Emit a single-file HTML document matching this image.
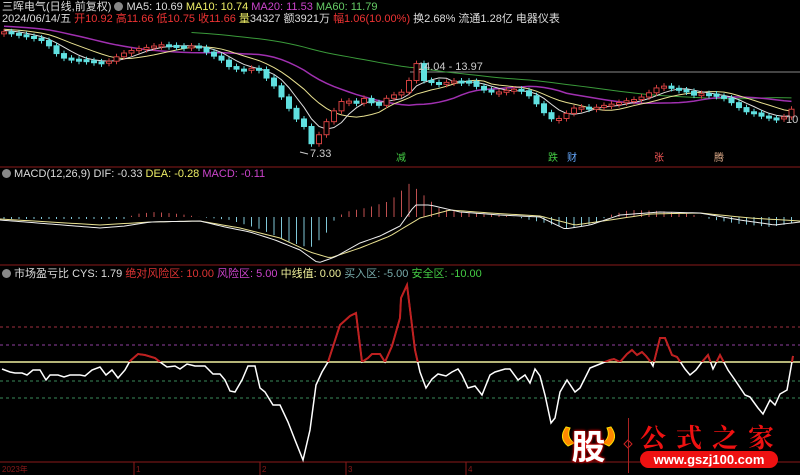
<!DOCTYPE html>
<html><head><meta charset="utf-8"><style>
html,body{margin:0;padding:0;background:#000;width:800px;height:475px;overflow:hidden;font-family:"Liberation Sans","Noto Sans CJK SC",sans-serif}
.t{position:absolute;font-size:11px;white-space:nowrap;line-height:12px}
</style></head><body>
<svg id="s" width="800" height="475" style="position:absolute;left:0;top:0">
<line x1="0" y1="167" x2="800" y2="167" stroke="#8a1a1a"/>
<line x1="0" y1="265" x2="800" y2="265" stroke="#8a1a1a"/>
<line x1="0" y1="462" x2="800" y2="462" stroke="#8a1a1a"/>
<line x1="410" y1="72" x2="800" y2="72" stroke="#888"/>
<line x1="0" y1="327" x2="800" y2="327" stroke="#a03040" stroke-dasharray="3,3"/>
<line x1="0" y1="345" x2="800" y2="345" stroke="#9040a0" stroke-dasharray="3,3"/>
<line x1="0" y1="381" x2="800" y2="381" stroke="#3a8a5a" stroke-dasharray="3,3"/>
<line x1="0" y1="398" x2="800" y2="398" stroke="#3a8a5a" stroke-dasharray="3,3"/>
<line x1="0" y1="362" x2="800" y2="362" stroke="#f0f0a0" stroke-width="1.5"/>
<g id="g"></g>
<text x="310" y="157" fill="#ccc" font-size="11" font-family="Liberation Sans">7.33</text>
<line x1="300" y1="152" x2="308" y2="154" stroke="#ccc"/>
<text x="418" y="70" fill="#ccc" font-size="11" font-family="Liberation Sans">14.04 - 13.97</text>
<text x="786" y="123" fill="#ccc" font-size="11" font-family="Liberation Sans">10</text>
<g font-size="8" fill="#8a1a1a" font-family="Liberation Sans">
<text x="2" y="472">2023年</text><text x="136" y="472">1</text><text x="262" y="472">2</text><text x="348" y="472">3</text><text x="468" y="472">4</text>
</g>
<g stroke="#8a1a1a"><line x1="134" y1="462" x2="134" y2="475"/><line x1="260" y1="462" x2="260" y2="475"/><line x1="346" y1="462" x2="346" y2="475"/><line x1="466" y1="462" x2="466" y2="475"/></g>
<defs><clipPath id="ab"><rect x="0" y="270" width="800" height="92"/></clipPath></defs>
<path d="M566 427 Q558 438 568 446 L574 443 Q566 437 570 428 Z" fill="#f80" stroke="#fd0" stroke-width="1"/>
<path d="M611 427 Q619 438 609 446 L603 443 Q611 437 607 428 Z" fill="#f80" stroke="#fd0" stroke-width="1"/>
<path d="M628 440 L632 444 L628 448 L624 444 Z" fill="none" stroke="#c22"/>
</svg>
<div class="t" style="left:2px;top:1px;color:#ddd">三晖电气(日线,前复权) <span style="display:inline-block;width:9px;height:9px;border-radius:50%;background:#888;vertical-align:-1px"></span> MA5: 10.69 <span style="color:#ee6">MA10: 10.74</span> <span style="color:#c4c">MA20: 11.53</span> <span style="color:#6c6">MA60: 11.79</span></div>
<div class="t" style="left:2px;top:13px;color:#ddd">2024/06/14/五 <span style="color:#e33">开10.92 高11.66 低10.75 收11.66</span> <span style="color:#ee6">量</span>34327 额3921万 <span style="color:#e33">幅1.06(10.00%)</span> 换2.68% 流通1.28亿 电器仪表</div>
<div class="t" style="left:2px;top:168px;color:#ddd"><span style="display:inline-block;width:9px;height:9px;border-radius:50%;background:#888;vertical-align:-1px"></span> MACD(12,26,9) DIF: -0.33 <span style="color:#ee6">DEA: -0.28</span> <span style="color:#c4c">MACD: -0.11</span></div>
<div class="t" style="left:2px;top:268px;color:#ddd"><span style="display:inline-block;width:9px;height:9px;border-radius:50%;background:#888;vertical-align:-1px"></span> 市场盈亏比 CYS: 1.79 <span style="color:#d33">绝对风险区: 10.00</span> <span style="color:#c4c">风险区: 5.00</span> <span style="color:#ee9">中线值: 0.00</span> <span style="color:#7aa">买入区: -5.00</span> <span style="color:#4c4">安全区: -10.00</span></div>
<div class="t" style="left:396px;top:153px;color:#4c4;font-size:10px">减</div>
<div class="t" style="left:548px;top:153px;color:#4c4;font-size:10px">跌</div>
<div class="t" style="left:567px;top:153px;color:#6af;font-size:10px">财</div>
<div class="t" style="left:654px;top:153px;color:#e55;font-size:10px">张</div>
<div class="t" style="left:714px;top:153px;color:#da8;font-size:10px">腾</div>
<div style="position:absolute;left:561px;top:420px;width:55px;height:50px;color:#fff;font:bold 34px 'Noto Sans CJK SC',sans-serif;text-shadow:0 0 3px #e00,0 0 2px #e00;text-align:center;line-height:50px">股</div>
<div style="position:absolute;left:628px;top:418px;width:1px;height:55px;background:#a22"></div>
<div style="position:absolute;left:640px;top:418px;color:#e11;font:bold 26px 'Noto Serif CJK SC',serif;letter-spacing:10px">公式之家</div>
<div style="position:absolute;left:640px;top:451px;width:138px;height:17px;border-radius:9px;background:#e11;color:#fff;font:bold 13px 'Liberation Sans',sans-serif;text-align:center;line-height:17px">www.gszj100.com</div>
<script>
(function(){
var NS="http://www.w3.org/2000/svg",g=document.getElementById('g');
function el(n,a){var e=document.createElementNS(NS,n);for(var k in a)e.setAttribute(k,a[k]);g.appendChild(e);return e}
function pl(p,c,w,extra){var a={points:p.map(function(q){return q.join(',')}).join(' '),fill:'none',stroke:c,'stroke-width':w||1};for(var k in extra)a[k]=extra[k];return el('polyline',a)}
function interp(k,x){for(var i=0;i<k.length-1;i++){if(x<=k[i+1][0]){var t=(x-k[i][0])/(k[i+1][0]-k[i][0]);return k[i][1]+t*(k[i+1][1]-k[i][1])}}return k[k.length-1][1]}
var P=[[0,30],[20,33],[40,37],[50,44],[60,55],[70,57],[80,58],[90,60],[100,62],[110,61],[120,55],[130,52],[140,50],[150,49],[160,47],[170,48],[180,49],[190,48],[200,50],[210,56],[220,60],[230,68],[240,70],[250,70],[255,62],[260,70],[265,75],[275,85],[285,100],[295,115],[305,125],[315,150],[320,128],[330,115],[340,100],[350,100],[355,105],[360,97],[370,100],[375,110],[385,100],[395,96],[405,93],[410,80],[415,62],[420,75],[425,85],[435,85],[445,85],[455,83],[470,83],[480,90],[495,93],[505,90],[515,88],[525,90],[535,100],[548,115],[556,118],[565,112],[575,105],[585,105],[595,106],[605,104],[615,103],[625,101],[635,100],[645,97],[655,90],[665,88],[675,92],[685,93],[690,96],[695,98],[705,95],[715,98],[725,100],[735,106],[745,112],[755,113],[765,117],[775,117],[785,115],[795,103]];
var xs=[],cl=[];for(var x=4;x<=796;x+=7.5){xs.push(x);cl.push(interp(P,x)+Math.sin(x*1.7)*2.5)}
function ma(n,pre){var r=[];for(var i=0;i<cl.length;i++){var s=0;for(var j=i-n+1;j<=i;j++)s+=(j<0?pre:cl[j]);r.push([xs[i],s/n])}return r}
pl(ma(60,20).slice(25),'#3a9a3a',1);
pl(ma(20,26),'#a030b0',1.5);
pl(ma(10,29),'#e8e090',1);
pl(ma(5,30),'#ddd',1);
for(var i=0;i<cl.length;i++){var o=i?cl[i-1]:cl[i]+2,c=cl[i],up=c<o,ty=Math.min(o,c),h=Math.max(2,Math.abs(o-c));
 var col=up?'#d04040':'#60e0e0';el('line',{x1:xs[i],x2:xs[i],y1:ty-3,y2:ty+h+3,stroke:col});
 el('rect',{x:xs[i]-2.5,y:ty,width:5,height:h,fill:up?'#000':col,stroke:col,'stroke-width':1});}
var D=[[0,220],[100,228],[125,226],[150,222],[200,221],[225,227],[250,232],[275,240],[300,250],[318,263],[335,257],[360,243],[380,236],[400,226],[415,205],[430,205],[460,212],[500,215],[540,217],[565,229],[590,225],[620,215],[660,212],[700,213],[740,220],[775,225],[800,222]];
var E=[[0,219],[100,225],[150,222],[200,221],[240,228],[280,238],[310,252],[330,258],[360,248],[390,236],[420,218],[450,210],[490,213],[540,216],[575,225],[610,220],[650,214],[700,213],[750,218],[800,221]];
var H=[[0,-2],[125,-2],[135,3],[155,5],[180,3],[200,0],[230,-3],[260,-12],[290,-25],[310,-31],[325,-18],[335,-2],[345,5],[370,10],[390,16],[410,34],[420,25],[440,8],[470,4],[500,2],[520,-1],[545,-6],[570,-12],[595,-6],[610,2],[630,7],[660,6],[690,3],[710,-2],[740,-7],[770,-10],[795,-6]];
var dp=[],ep=[];for(var x=0;x<=800;x+=4){dp.push([x,interp(D,x)]);ep.push([x,interp(E,x)])}
for(var x=4;x<=796;x+=7.5){var v=interp(H,x);var col=v>0?'#c05050':'#80c8d8';el('line',{x1:x,x2:x,y1:217,y2:217-v,stroke:col})}
pl(ep,'#e8e090',1);pl(dp,'#eee',1);
var C=[[2,369],[10,372],[15,373],[22,373],[27,375],[33,370],[40,370],[46,380],[50,375],[58,375],[64,377],[70,375],[80,375],[85,376],[92,370],[100,367],[106,375],[112,370],[118,378],[125,370],[130,361],[138,354],[145,355],[155,358],[160,362],[167,367],[175,366],[180,369],[187,364],[195,366],[205,366],[213,374],[220,374],[225,380],[230,391],[235,392],[242,380],[248,366],[255,366],[260,388],[265,392],[273,405],[280,405],[288,422],[295,440],[303,460],[310,430],[316,385],[322,372],[328,362],[340,325],[350,316],[356,313],[362,362],[368,358],[372,354],[380,354],[385,362],[392,346],[400,318],[401,298],[407,285],[415,350],[420,372],[426,388],[432,379],[438,374],[446,376],[452,372],[458,369],[462,375],[468,388],[475,386],[482,395],[490,375],[495,372],[505,369],[510,369],[518,380],[525,375],[530,383],[535,369],[540,376],[545,395],[551,423],[555,418],[560,392],[567,380],[575,392],[580,388],[590,368],[600,364],[610,360],[614,359],[620,362],[627,354],[632,350],[637,355],[642,352],[646,356],[650,361],[653,366],[660,338],[665,338],[672,355],[677,357],[685,369],[690,375],[696,370],[702,362],[708,355],[713,369],[720,355],[728,370],[735,380],[745,395],[750,397],[758,408],[763,414],[770,400],[775,405],[780,394],[787,390],[793,356]];
pl(C,'#fff',1.5);pl(C,'#c02020',2,{'clip-path':'url(#ab)'});
})();
</script>
</body></html>
